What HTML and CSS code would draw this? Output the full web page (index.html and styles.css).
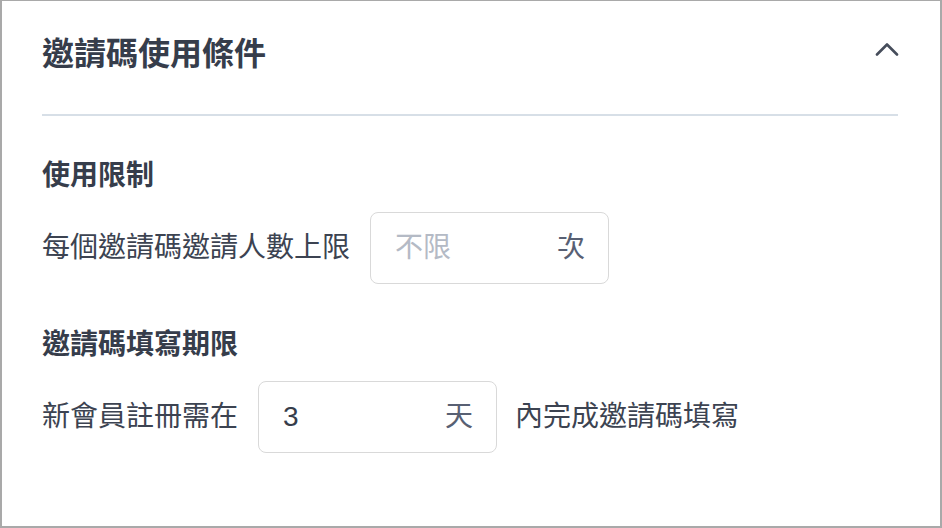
FILE: index.html
```html
<!DOCTYPE html>
<html lang="zh-Hant">

<head>
  <meta charset="UTF-8">
  <meta name="viewport" content="width=device-width, initial-scale=1.0">
  <title>邀請碼使用條件</title>
  <link rel="stylesheet" href="styles.css">
</head>

<body>
  <div class="card">
    <div class="card-header">
      <h2 class="card-title">邀請碼使用條件</h2>
      <button class="toggle" aria-label="收合">
        <svg width="24" height="14" viewBox="0 0 24 14">
          <path d="M2 12.5 L12 2.5 L22 12.5" fill="none" stroke="#464d5b" stroke-width="2.6" stroke-linecap="round" stroke-linejoin="round"/>
        </svg>
      </button>
    </div>

    <!-- 使用限制 -->
    <div class="section">
      <h3 class="section-title">使用限制</h3>
      <div class="field-row">
        <label for="limit">每個邀請碼邀請人數上限</label>
        <div class="unit-input">
          <input type="text" id="limit" placeholder="不限">
          <span class="unit">次</span>
        </div>
      </div>
    </div>

    <!-- 填寫期限 -->
    <div class="section">
      <h3 class="section-title">邀請碼填寫期限</h3>
      <div class="field-row">
        <label for="days">新會員註冊需在</label>
        <div class="unit-input">
          <input type="text" id="days" value="3">
          <span class="unit">天</span>
        </div>
        <span class="suffix">內完成邀請碼填寫</span>
      </div>
    </div>
  </div>
</body>

</html>
```

FILE: styles.css
```css
:root {
  --text-dark: #363d4b;
  --text: #3c4351;
  --muted: #b4bac5;
  --unit: #586073;
  --divider: #d7dfe7;
  --field-border: #d9d9d9;
}

* {
  box-sizing: border-box;
}

body {
  margin: 0;
  background: #fff;
  font-family: "Liberation Sans", "Noto Sans CJK TC", sans-serif;
  color: var(--text);
}

.card {
  width: 942px;
  height: 528px;
  border: 2px solid #a9a9a9;
  border-top-width: 1px;
  padding: 0 42px 0 40px;
  background: #fff;
}

.card-header {
  display: flex;
  align-items: center;
  justify-content: space-between;
  padding: 33px 0 40px;
  border-bottom: 2px solid var(--divider);
}

.card-title {
  margin: 0;
  font-size: 32px;
  line-height: 40px;
  font-weight: 600;
  color: var(--text-dark);
}

.toggle {
  border: none;
  background: none;
  padding: 0;
  margin: 0 -1px 10px 0;
  display: flex;
  cursor: pointer;
}

.section {
  margin-top: 42px;
}

.section + .section {
  margin-top: 43px;
}

.section-title {
  margin: 0 0 18px;
  font-size: 28px;
  line-height: 36px;
  font-weight: 600;
  color: var(--text-dark);
}

.field-row {
  display: flex;
  align-items: center;
  gap: 20px;
  font-size: 28px;
  line-height: 36px;
}

.unit-input {
  display: flex;
  align-items: center;
  width: 239px;
  height: 72px;
  padding: 0 23px 0 24px;
  border: 1.5px solid var(--field-border);
  border-radius: 8px;
}

.unit-input input {
  flex: 1;
  min-width: 0;
  border: none;
  outline: none;
  padding: 0;
  font: inherit;
  color: var(--text-dark);
  background: transparent;
}

.unit-input input::placeholder {
  color: var(--muted);
}

.unit {
  color: var(--unit);
}

.suffix {
  margin-left: -2px;
}
```
